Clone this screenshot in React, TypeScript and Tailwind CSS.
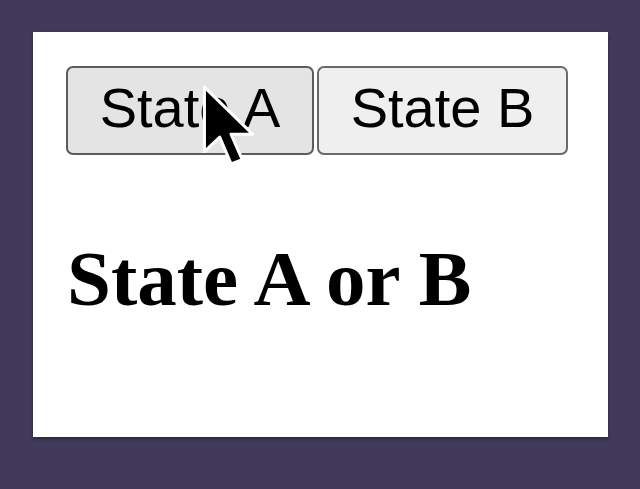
import React from 'react'

function Cursor() {
  return (
    <svg
      className="pointer-events-none absolute left-[169px] top-[53px]"
      width="54"
      height="84"
      viewBox="-2 -2 52 82"
    >
      <path
        d="M0 0 L0 63 L15 49 L26 75 L37 71 L26 46 L47 46 Z"
        fill="#000"
        stroke="#fff"
        strokeWidth="3"
        strokeLinejoin="round"
      />
    </svg>
  )
}

export default function App() {
  return (
    <div className="h-[489px] w-[640px] bg-[#413a5a] pl-[33px] pt-[32px]">
      <div className="relative h-[405px] w-[575px] bg-white shadow-[0_2px_3px_rgba(0,0,0,0.35)]">
        <div className="flex gap-[3px] pl-[33px] pt-[34px]">
          <button className="w-[248px] rounded-[7px] border-2 border-[#5c5c5c] bg-[#e4e4e4] pb-[17px] pt-[12px] text-center font-['Liberation_Sans',Arial,sans-serif] text-[56px] leading-none text-black">
            State A
          </button>
          <button className="w-[251px] rounded-[7px] border-2 border-[#6a6a6a] bg-[#efefef] pb-[17px] pt-[12px] text-center font-['Liberation_Sans',Arial,sans-serif] text-[56px] leading-none text-black">
            State B
          </button>
        </div>
        <h1 className="pl-[34px] pt-[84px] font-['Liberation_Serif','Times_New_Roman',serif] text-[79px] font-bold leading-none text-black">
          State A or B
        </h1>
        <Cursor />
      </div>
    </div>
  )
}
